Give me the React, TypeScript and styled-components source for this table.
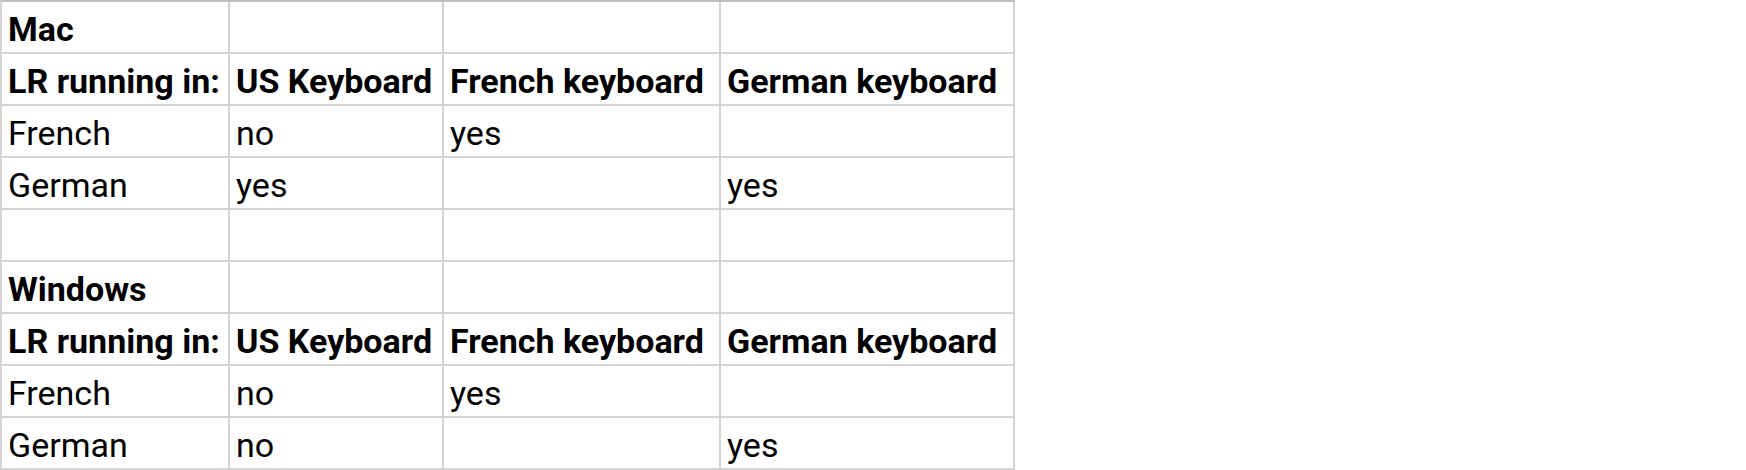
import React from "react";
import styled, { createGlobalStyle } from "styled-components";

const Global = createGlobalStyle`
  html, body { margin: 0; padding: 0; background: #ffffff; }
  body { font-family: Roboto, "Liberation Sans", sans-serif; }
`;

const Sheet = styled.div`
  display: grid;
  grid-template-columns: 226px 212px 275px 292px;
  grid-auto-rows: 50px;
  gap: 2px;
  width: max-content;
  background: #d4d4d4;
  border-left: 2px solid #d4d4d4;
  border-right: 2px solid #d4d4d4;
  border-top: 2px solid #bdbdbd;
  border-bottom: 2px solid #d4d4d4;
`;

const Cell = styled.div<{ $bold?: boolean }>`
  background: #ffffff;
  display: flex;
  align-items: flex-end;
  padding: 0 0 6px 6px;
  box-sizing: border-box;
  font-size: 34px;
  line-height: 1;
  font-weight: ${(p) => (p.$bold ? 700 : 400)};
  color: #000000;
  white-space: nowrap;
  overflow: hidden;
`;

type Row = { cells: string[]; bold?: boolean };

const rows: Row[] = [
  { cells: ["Mac", "", "", ""], bold: true },
  { cells: ["LR running in:", "US Keyboard", "French keyboard", "German keyboard"], bold: true },
  { cells: ["French", "no", "yes", ""] },
  { cells: ["German", "yes", "", "yes"] },
  { cells: ["", "", "", ""] },
  { cells: ["Windows", "", "", ""], bold: true },
  { cells: ["LR running in:", "US Keyboard", "French keyboard", "German keyboard"], bold: true },
  { cells: ["French", "no", "yes", ""] },
  { cells: ["German", "no", "", "yes"] },
];

export default function App() {
  return (
    <>
      <Global />
      <Sheet>
        {rows.map((r, i) =>
          r.cells.map((c, j) => (
            <Cell key={`${i}-${j}`} $bold={r.bold}>
              {c}
            </Cell>
          ))
        )}
      </Sheet>
    </>
  );
}
